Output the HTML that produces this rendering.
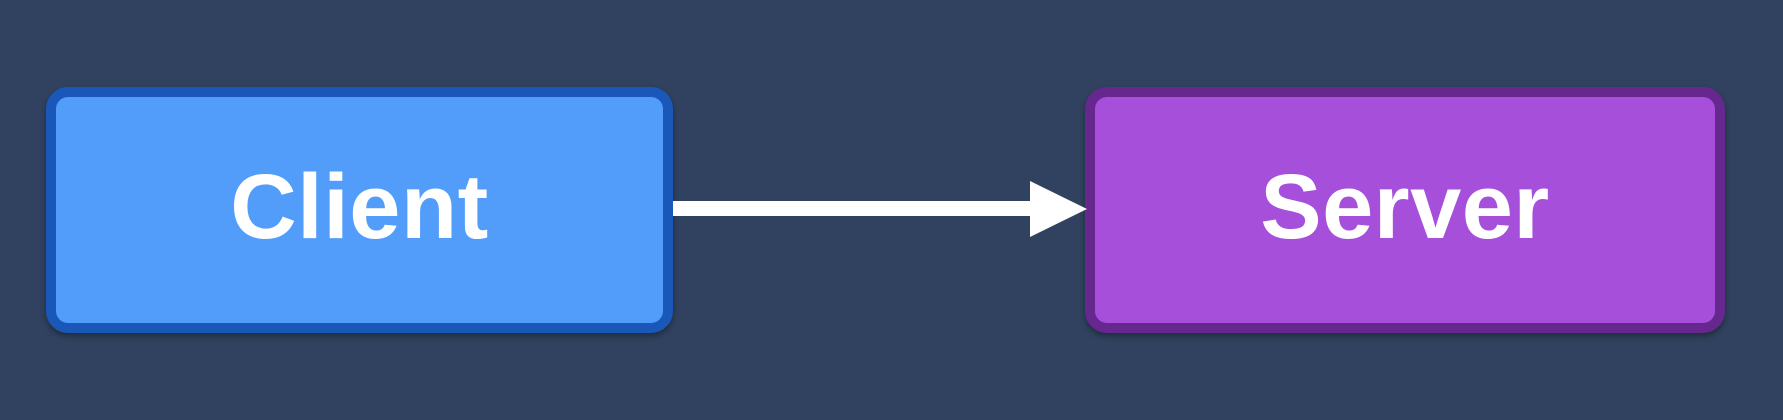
<!DOCTYPE html>
<html><head><style>
body{margin:0;width:1783px;height:420px;background:#30425f;position:relative;overflow:hidden;font-family:"Liberation Sans",sans-serif}
.box{position:absolute;top:87px;height:246px;box-sizing:border-box;border:10px solid;border-radius:22px;display:flex;align-items:center;justify-content:center;color:#fff;font-weight:bold;font-size:92px;letter-spacing:0.5px;box-shadow:0 3px 6px rgba(0,0,0,.35)}
.c{left:46px;width:627px;background:#529cfa;border-color:#1958b8}
.s{left:1085px;width:640px;background:#a54fdb;border-color:#66288f}
</style></head><body>
<div class="box c"><span style="margin-top:-5px">Client</span></div>
<div class="box s"><span style="margin-top:-5px">Server</span></div>
<svg style="position:absolute;left:0;top:0" width="1783" height="420">
<rect x="673" y="201" width="360" height="15" fill="#fff"/>
<polygon points="1030,181 1087,209 1030,237" fill="#fff"/>
</svg>
</body></html>
